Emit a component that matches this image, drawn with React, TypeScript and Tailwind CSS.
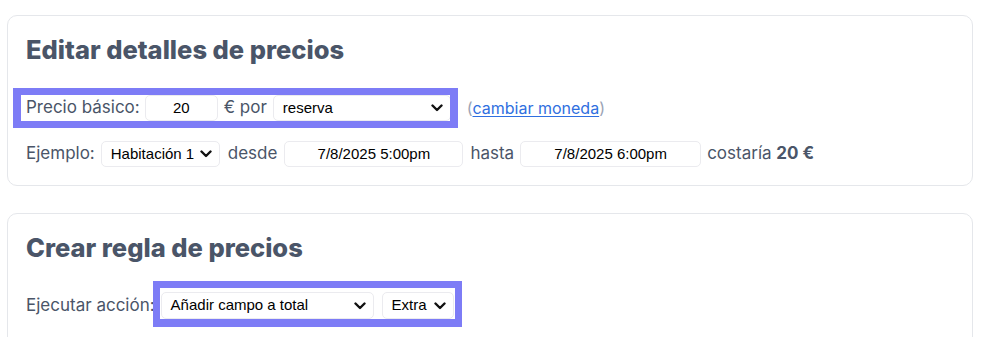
import React from 'react';

const label = 'text-[17px] text-[#4a5568]';
const control =
  'h-[26px] rounded-[5px] border border-[#ebebef] bg-white text-[15px] text-black flex items-center';
const ctrlFont = { fontFamily: '"Liberation Sans", Arial, sans-serif' };

function Chevron() {
  return (
    <svg width="12" height="8" viewBox="0 0 12 8" className="shrink-0">
      <polyline points="1.5,1.5 6,6 10.5,1.5" fill="none" stroke="#111" strokeWidth="2.4" strokeLinecap="round" strokeLinejoin="round" />
    </svg>
  );
}

function Select({ value, width, tall }: { value: string; width: string; tall?: boolean }) {
  return (
    <div className={`${control} ${width} ${tall ? 'h-[27px]' : ''} justify-between pl-[9px] pr-[7px]`}>
      <span className="whitespace-nowrap">{value}</span>
      <Chevron />
    </div>
  );
}

function Field({ value, width }: { value: string; width: string }) {
  return <div className={`${control} ${width} justify-center whitespace-nowrap`}>{value}</div>;
}

function Highlight({ className }: { className: string }) {
  return <div className={`pointer-events-none absolute border-[#7d7cf6] ${className}`} />;
}

export default function App() {
  return (
    <div className="min-h-screen bg-white pt-[15px] pl-[7px]" style={{ fontFamily: 'Inter, "Noto Sans", sans-serif' }}>
      <div className="w-[966px] rounded-[10px] border border-[#e5e7eb] px-[18px] pt-[18px] pb-[18px]">
        <h2 className="text-[25.5px] leading-[32px] font-extrabold text-[#4a5568]">Editar detalles de precios</h2>

        <div className="relative mt-[29px] flex h-[26px] items-center">
          <span className={label}>Precio básico:</span>
          <div className="ml-[5px]" style={ctrlFont}>
            <Field value="20" width="w-[73px]" />
          </div>
          <span className={`${label} ml-[6px]`}>€ por</span>
          <div className="ml-[6px]" style={ctrlFont}>
            <Select value="reserva" width="w-[178px]" />
          </div>
          <span className="ml-[16px] text-[16px] text-[#9aa3b5]">
            (<a className="text-[#2f6fe0] underline underline-offset-2">cambiar moneda</a>)
          </span>
          <Highlight className="-left-[13px] -top-[7px] h-[40px] w-[445px] border-y-[7px] border-x-[8px]" />
        </div>

        <div className="mt-[20px] flex h-[26px] items-center">
          <span className={label}>Ejemplo:</span>
          <div className="ml-[6px]" style={ctrlFont}>
            <Select value="Habitación 1" width="w-[119px]" />
          </div>
          <span className={`${label} ml-[8px]`}>desde</span>
          <div className="ml-[7px]" style={ctrlFont}>
            <Field value="7/8/2025 5:00pm" width="w-[179px]" />
          </div>
          <span className={`${label} ml-[7px]`}>hasta</span>
          <div className="ml-[6px]" style={ctrlFont}>
            <Field value="7/8/2025 6:00pm" width="w-[181px]" />
          </div>
          <span className={`${label} ml-[6px]`}>
            costaría <b className="font-bold">20 €</b>
          </span>
        </div>
      </div>

      <div className="mt-[27px] w-[966px] rounded-[10px] border border-[#e5e7eb] px-[18px] pt-[18px] pb-[40px]">
        <h2 className="text-[25.5px] leading-[32px] font-extrabold text-[#4a5568]">Crear regla de precios</h2>

        <div className="relative mt-[28px] flex h-[27px] items-center">
          <span className={label}>Ejecutar acción:</span>
          <div className="ml-[6px] flex gap-[8px]" style={ctrlFont}>
            <Select value="Añadir campo a total" width="w-[213px]" tall />
            <Select value="Extra" width="w-[72px]" tall />
          </div>
          <Highlight className="left-[127px] -top-[11px] h-[46px] w-[309px] border-[7px] border-b-[8px]" />
        </div>
      </div>
    </div>
  );
}
